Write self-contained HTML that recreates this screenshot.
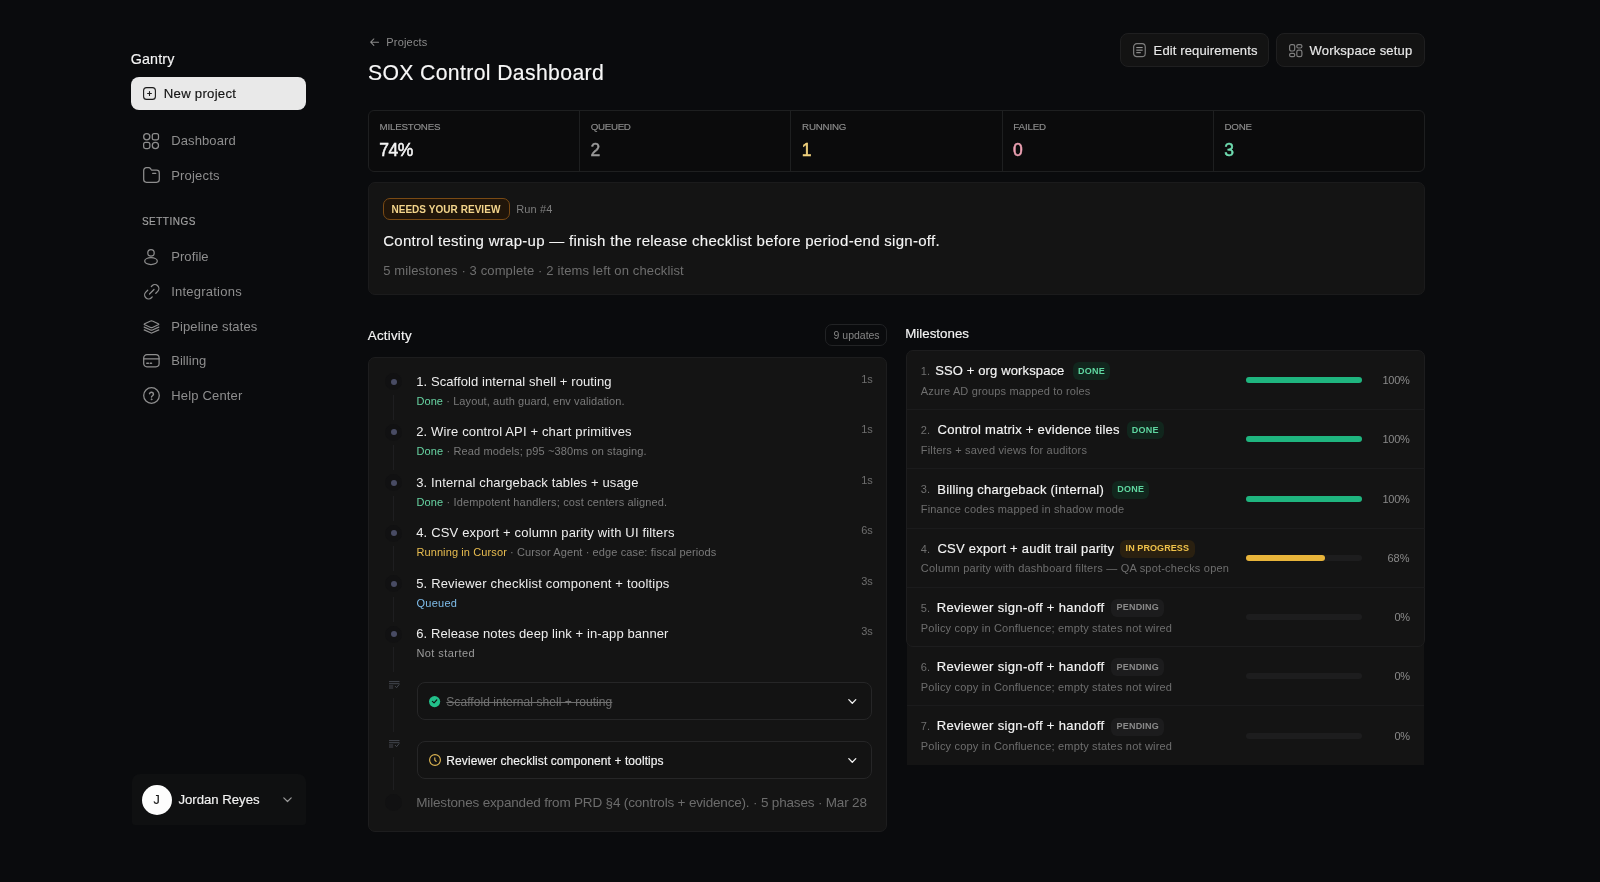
<!DOCTYPE html>
<html lang="en">
<head>
<meta charset="utf-8">
<title>SOX Control Dashboard</title>
<style>
*{box-sizing:border-box;margin:0;padding:0}
html,body{width:1600px;height:882px;overflow:hidden;background:#0a0b0d;color:#f2f2f2;font-family:"Liberation Sans",sans-serif}
#app{position:absolute;left:0;top:0;width:1600px;height:882px;will-change:transform}
.a{position:absolute}
.t{position:absolute;white-space:nowrap;line-height:1}
svg{display:block;overflow:visible;position:absolute}
.card{background:#141414;border:1px solid #1d1d1e;border-radius:7px}
.halo{width:17px;height:17px;border-radius:50%;background:#111112;left:385.4px}
.dot{width:6px;height:6px;border-radius:50%;background:#484b63;left:390.9px}
.xb{left:417px;width:455px;height:38px;border:1px solid #262627;border-radius:8px;background:#131313}
.bd{height:18px;border-radius:6px}
.trk{left:1246px;width:116px;height:6px;border-radius:3px;background:#1d1d1e}
.bar{height:6px;border-radius:3px;left:1246px}
.g{color:#67d3a2}.y{color:#e8bd50}.b{color:#7fbdea}.n{color:#9b9b9b}
</style>
</head>
<body>
<div id="app">
<aside id="sidebar">
<div class="a" style="left:131px;top:77px;width:175px;height:33px;border-radius:8px;background:#e9e9e9"></div>
<svg style="left:143px;top:87px" width="13" height="13" viewBox="0 0 13 13" fill="none" stroke="#1a1a1a" stroke-width="1.1" stroke-linecap="round"><rect x=".6" y=".6" width="11.8" height="11.8" rx="3"/><path d="M6.5 4.6v3.8M4.6 6.5h3.8"/></svg>
<svg style="left:143px;top:132.6px" width="16" height="16" viewBox="0 0 16 16" fill="none" stroke="#8e8e8e" stroke-width="1.25" stroke-linecap="round" stroke-linejoin="round"><circle cx="3.75" cy="3.75" r="3.1"/><rect x="9.3" y=".65" width="6.2" height="6.2" rx="1.9"/><rect x=".65" y="9.3" width="6.2" height="6.2" rx="1.9"/><circle cx="12.4" cy="12.4" r="3.1"/></svg>
<svg style="left:143px;top:167.3px" width="17" height="16" viewBox="0 0 17 16" fill="none" stroke="#8e8e8e" stroke-width="1.25" stroke-linecap="round" stroke-linejoin="round"><path d="M.7 3.4A2.7 2.7 0 0 1 3.4.7h2.2c.9 0 1.6.4 2.1 1.1l.5.8c.3.4.7.6 1.200.6h4.200a2.700 2.700 0 0 1 2.700 2.700v6.700a2.700 2.700 0 0 1-2.700 2.700H3.400A2.700 2.700 0 0 1 .7 12.600z"/><path d="M9.600 6.300h3.200"/></svg>
<svg style="left:144px;top:249.2px" width="14" height="16" viewBox="0 0 14 16" fill="none" stroke="#8e8e8e" stroke-width="1.25" stroke-linecap="round" stroke-linejoin="round"><circle cx="7" cy="3.900" r="3.200"/><ellipse cx="7" cy="12.100" rx="6.300" ry="3.400"/></svg>
<svg style="left:143.5px;top:284px" width="15.5" height="15.5" viewBox="0 0 15.5 15.5" fill="none" stroke="#8e8e8e" stroke-width="1.25" stroke-linecap="round" stroke-linejoin="round"><path d="M7.300 2.600l.8-.8a3.900 3.900 0 0 1 5.600 5.600l-1.900 1.900"/><path d="M8.200 12.900l-.8.800a3.900 3.900 0 0 1-5.600-5.600l1.900-1.900"/><path d="M5.500 10l4.500-4.500"/></svg>
<svg style="left:142.8px;top:319.5px" width="17" height="14" viewBox="0 0 17 14" fill="none" stroke="#8e8e8e" stroke-width="1.25" stroke-linecap="round" stroke-linejoin="round"><path d="M7.600 1 1.700 3.700c-.6.300-.6.800 0 1.100l5.900 2.700c.6.300 1.200.300 1.800 0l5.900-2.700c.6-.300.6-.800 0-1.100L9.400 1c-.6-.300-1.200-.300-1.800 0z"/><path d="M1.200 7.100l6.400 2.900c.6.300 1.200.300 1.800 0l6.400-2.900"/><path d="M1.200 9.900l6.400 2.900c.6.300 1.200.300 1.800 0l6.400-2.900"/></svg>
<svg style="left:142.8px;top:354.2px" width="17" height="13.500" viewBox="0 0 17 13.5" fill="none" stroke="#8e8e8e" stroke-width="1.25" stroke-linecap="round" stroke-linejoin="round"><rect x=".7" y=".7" width="15.400" height="12.100" rx="3.200"/><path d="M.7 4.800h15.400"/><path d="M3.800 9.300h1.600M7.300 9.300h1.200" stroke-width="1.500"/></svg>
<svg style="left:143px;top:387.200px" width="17" height="17" viewBox="0 0 17 17" fill="none" stroke="#8e8e8e" stroke-width="1.25" stroke-linecap="round" stroke-linejoin="round"><circle cx="8.500" cy="8.500" r="7.800"/><path d="M6.500 6.700a2.050 2.050 0 0 1 4 .600c0 1.300-2 1.500-2 2.800" stroke-width="1.400"/><circle cx="8.500" cy="12.300" r=".55" fill="#8e8e8e" stroke-width=".7"/></svg>
<div class="a" style="left:131.5px;top:774px;width:174.700px;height:50.500px;border-radius:8px 8px 3px 3px;background:#0f1011"></div>
<div class="a" style="left:141.7px;top:784.7px;width:30px;height:30px;border-radius:50%;background:#fdfdfd"></div>
<svg style="left:283.200px;top:797px" width="9" height="5.500" viewBox="0 0 9 5.500" fill="none" stroke="#9a9a9a" stroke-width="1.200" stroke-linecap="round" stroke-linejoin="round"><path d="M.8.800 4.500 4.500 8.200.800"/></svg>
<div class="t" style="top:52.00px;font-size:14.3px;color:#f4f4f4;left:130.70px;letter-spacing:0.166px;-webkit-text-stroke:.16px;">Gantry</div>
<div class="t" style="top:87.00px;font-size:13.2px;color:#141414;left:163.80px;letter-spacing:0.251px;-webkit-text-stroke:.16px;">New project</div>
<div class="t" style="top:134.00px;font-size:13px;color:#8e8e8e;left:171.20px;letter-spacing:0.110px;">Dashboard</div>
<div class="t" style="top:169.00px;font-size:13px;color:#8e8e8e;left:171.20px;letter-spacing:0.191px;">Projects</div>
<div class="t" style="top:250.00px;font-size:13px;color:#8e8e8e;left:171.20px;letter-spacing:0.092px;">Profile</div>
<div class="t" style="top:285.00px;font-size:13px;color:#8e8e8e;left:171.20px;letter-spacing:0.230px;">Integrations</div>
<div class="t" style="top:320.00px;font-size:13px;color:#8e8e8e;left:171.20px;letter-spacing:0.109px;">Pipeline states</div>
<div class="t" style="top:354.00px;font-size:13px;color:#8e8e8e;left:171.20px;letter-spacing:0.059px;">Billing</div>
<div class="t" style="top:389.00px;font-size:13px;color:#8e8e8e;left:171.20px;letter-spacing:0.175px;">Help Center</div>
<div class="t" style="top:217.00px;font-size:10px;color:#a0a0a0;left:141.90px;letter-spacing:0.498px;-webkit-text-stroke:.16px;">SETTINGS</div>
<div class="t" style="top:794.00px;font-size:12.5px;color:#151515;left:153.50px;-webkit-text-stroke:.16px;">J</div>
<div class="t" style="top:793.00px;font-size:13.2px;color:#f2f2f2;left:178.40px;letter-spacing:-0.015px;-webkit-text-stroke:.16px;">Jordan Reyes</div>
</aside>
<header id="pagehead">
<svg style="left:369.600px;top:38px" width="9.200" height="8.300" viewBox="0 0 10 9" fill="none" stroke="#8a8a8a" stroke-width="1.100" stroke-linecap="round" stroke-linejoin="round"><path d="M9.300 4.500H.800M4.200 1 .7 4.500l3.500 3.500"/></svg>
<div class="a" style="left:1120px;top:33px;width:149px;height:34px;border-radius:8px;background:#131313;border:1px solid #1f1f20"></div>
<svg style="left:1133.1px;top:42.8px" width="12.9" height="14.3" viewBox="0 0 12.9 14.3" fill="none" stroke="#7e7e7e" stroke-width="1.200" stroke-linecap="round"><rect x=".65" y=".65" width="11.600" height="13" rx="3.200"/><path d="M3.700 4.600h5.600M3.700 7.150h5.600M3.700 9.700h3.700" stroke="#b5b5b5" stroke-width=".9"/></svg>
<div class="a" style="left:1276px;top:33px;width:149px;height:34px;border-radius:8px;background:#131313;border:1px solid #1f1f20"></div>
<svg style="left:1288.6px;top:43.5px" width="13.5" height="13.3" viewBox="0 0 13.5 13.3" fill="none" stroke="#7e7e7e" stroke-width="1.200" stroke-linecap="round"><rect x=".6" y=".6" width="5.100" height="6.400" rx="1.700"/><rect x="7.800" y=".6" width="5.100" height="3.400" rx="1.500"/><rect x=".6" y="9.300" width="5.100" height="3.400" rx="1.500"/><rect x="7.800" y="6.200" width="5.100" height="6.500" rx="1.700"/></svg>
<div class="t" style="top:37.00px;font-size:11px;color:#8a8a8a;left:386.30px;letter-spacing:0.181px;">Projects</div>
<div class="t" style="top:62.00px;font-size:21.2px;color:#f7f7f7;left:367.90px;letter-spacing:0.372px;-webkit-text-stroke:.16px;">SOX Control Dashboard</div>
<div class="t" style="top:44.00px;font-size:13px;color:#e8e8e8;left:1153.60px;letter-spacing:0.124px;-webkit-text-stroke:.16px;">Edit requirements</div>
<div class="t" style="top:44.00px;font-size:13px;color:#e8e8e8;left:1309.60px;letter-spacing:0.166px;-webkit-text-stroke:.16px;">Workspace setup</div>
</header>
<section id="stats">
<div class="a" style="left:368px;top:110px;width:1057px;height:62px;border:1px solid #1e1f20;border-radius:6px;background:#0b0b0c"></div>
<div class="a" style="left:579px;top:111px;width:1px;height:59.500px;background:#1e1f20"></div>
<div class="a" style="left:790px;top:111px;width:1px;height:59.500px;background:#1e1f20"></div>
<div class="a" style="left:1002px;top:111px;width:1px;height:59.500px;background:#1e1f20"></div>
<div class="a" style="left:1213px;top:111px;width:1px;height:59.500px;background:#1e1f20"></div>
<div class="t" style="top:122.00px;font-size:9.75px;color:#8e8e8e;left:379.60px;letter-spacing:-0.197px;-webkit-text-stroke:.15px;">MILESTONES</div>
<div class="t" style="top:142.00px;font-size:17.5px;color:#f5f5f5;left:379.30px;letter-spacing:-0.510px;-webkit-text-stroke:.5px;">74%</div>
<div class="t" style="top:122.00px;font-size:9.75px;color:#8e8e8e;left:590.85px;letter-spacing:-0.336px;-webkit-text-stroke:.15px;">QUEUED</div>
<div class="t" style="top:142.00px;font-size:17.5px;color:#9a9a9a;left:590.55px;-webkit-text-stroke:.5px;">2</div>
<div class="t" style="top:122.00px;font-size:9.75px;color:#8e8e8e;left:802.10px;letter-spacing:-0.200px;-webkit-text-stroke:.15px;">RUNNING</div>
<div class="t" style="top:142.00px;font-size:17.5px;color:#f2d27e;left:801.80px;-webkit-text-stroke:.5px;">1</div>
<div class="t" style="top:122.00px;font-size:9.75px;color:#8e8e8e;left:1013.35px;letter-spacing:-0.168px;-webkit-text-stroke:.15px;">FAILED</div>
<div class="t" style="top:142.00px;font-size:17.5px;color:#f0a3b5;left:1013.05px;-webkit-text-stroke:.5px;">0</div>
<div class="t" style="top:122.00px;font-size:9.75px;color:#8e8e8e;left:1224.60px;letter-spacing:-0.268px;-webkit-text-stroke:.15px;">DONE</div>
<div class="t" style="top:142.00px;font-size:17.5px;color:#6fdcb0;left:1224.30px;-webkit-text-stroke:.5px;">3</div>
</section>
<section id="review">
<div class="a card" style="left:368px;top:182px;width:1057px;height:113px;border-color:#1b1b1c"></div>
<div class="a" style="left:383px;top:198px;width:126.500px;height:22px;border:1px solid #7a4a14;border-radius:7px;background:#20150a"></div>
<div class="t" style="top:205.00px;font-size:10px;color:#f3d48b;left:391.40px;font-weight:700;letter-spacing:0.049px;">NEEDS YOUR REVIEW</div>
<div class="t" style="top:204.00px;font-size:11px;color:#7d7d7d;left:516.20px;letter-spacing:0.136px;">Run #4</div>
<div class="t" style="top:233.00px;font-size:15px;color:#f5f5f5;left:383.20px;letter-spacing:0.285px;-webkit-text-stroke:.12px;">Control testing wrap-up — finish the release checklist before period-end sign-off.</div>
<div class="t" style="top:264.00px;font-size:13px;color:#6e6e6e;left:383.20px;letter-spacing:0.123px;">5 milestones · 3 complete · 2 items left on checklist</div>
</section>
<section id="activity">
<div class="a" style="left:825.400px;top:324.400px;width:61.700px;height:21.200px;border:1px solid #222325;border-radius:7px"></div>
<div class="a card" style="left:368px;top:357px;width:519px;height:475px"></div>
<div class="a" style="left:393px;top:394.6px;width:1px;height:25.0px;background:#1e1e20"></div>
<div class="a" style="left:393px;top:445.1px;width:1px;height:25.0px;background:#1e1e20"></div>
<div class="a" style="left:393px;top:495.6px;width:1px;height:25.0px;background:#1e1e20"></div>
<div class="a" style="left:393px;top:546.1px;width:1px;height:25.0px;background:#1e1e20"></div>
<div class="a" style="left:393px;top:596.6px;width:1px;height:25.0px;background:#1e1e20"></div>
<div class="a" style="left:393px;top:647.1px;width:1px;height:25.4px;background:#1e1e20"></div>
<div class="a" style="left:393px;top:698.0px;width:1px;height:33.5px;background:#1e1e20"></div>
<div class="a" style="left:393px;top:757.0px;width:1px;height:32.5px;background:#1e1e20"></div>
<div class="a halo" style="top:373.1px"></div><div class="a dot" style="top:378.6px"></div>
<div class="a halo" style="top:423.6px"></div><div class="a dot" style="top:429.1px"></div>
<div class="a halo" style="top:474.1px"></div><div class="a dot" style="top:479.6px"></div>
<div class="a halo" style="top:524.6px"></div><div class="a dot" style="top:530.1px"></div>
<div class="a halo" style="top:575.1px"></div><div class="a dot" style="top:580.6px"></div>
<div class="a halo" style="top:625.6px"></div><div class="a dot" style="top:631.1px"></div>
<svg style="left:388.7px;top:680.8px" width="10.500" height="8" viewBox="0 0 10.500 8" fill="none" stroke="#4a4d56" stroke-width=".9" stroke-linecap="round" stroke-linejoin="round"><path d="M.4.600h9.700M.4 2.700h9.700M.4 5h3.400M.4 7h3.400M6.200 5.300l1.400 1.400 2.400-3"/></svg>
<div class="a xb" style="top:682px"></div>
<svg style="left:429px;top:695.700px" width="11.200" height="11.200" viewBox="0 0 11.200 11.200"><circle cx="5.600" cy="5.600" r="5.600" fill="#22c08a"/><path d="M3.400 5.400 5.100 6.900 7.800 3.900" fill="none" stroke="#121212" stroke-width="1.200" stroke-linecap="round" stroke-linejoin="round"/></svg>
<svg style="left:848.200px;top:698.5px" width="8.600" height="5.200" viewBox="0 0 9 5.500" fill="none" stroke="#f0f0f0" stroke-width="1.400" stroke-linecap="round" stroke-linejoin="round"><path d="M.8.700 4.500 4.500 8.200.700"/></svg>
<svg style="left:388.7px;top:739.8px" width="10.500" height="8" viewBox="0 0 10.500 8" fill="none" stroke="#4a4d56" stroke-width=".9" stroke-linecap="round" stroke-linejoin="round"><path d="M.4.600h9.700M.4 2.700h9.700M.4 5h3.400M.4 7h3.400M6.200 5.300l1.400 1.400 2.400-3"/></svg>
<div class="a xb" style="top:741px"></div>
<svg style="left:428.600px;top:754.200px" width="12" height="12" viewBox="0 0 12 12" fill="none" stroke="#dcb452" stroke-width="1.150" stroke-linecap="round" stroke-linejoin="round"><circle cx="6" cy="6" r="5.400"/><path d="M5.800 3.900v2.100l1.300 1.400"/></svg>
<svg style="left:848.200px;top:757.5px" width="8.600" height="5.200" viewBox="0 0 9 5.500" fill="none" stroke="#f0f0f0" stroke-width="1.400" stroke-linecap="round" stroke-linejoin="round"><path d="M.8.700 4.500 4.500 8.200.700"/></svg>
<div class="a halo" style="top:794px;background:#111112"></div>
<div class="t" style="top:329.00px;font-size:13.3px;color:#f4f4f4;left:367.80px;letter-spacing:0.234px;-webkit-text-stroke:.16px;">Activity</div>
<div class="t" style="top:330.00px;font-size:10.5px;color:#858585;left:833.60px;letter-spacing:-0.014px;">9 updates</div>
<div class="t" style="top:375.00px;font-size:13px;color:#ededed;left:416.20px;letter-spacing:0.084px;">1. Scaffold internal shell + routing</div>
<div class="t" style="top:396.00px;font-size:11px;color:#7a7a7a;left:416.40px;letter-spacing:0.096px;"><span class="g">Done</span> · Layout, auth guard, env validation.</div>
<div class="t" style="top:374.00px;font-size:11px;color:#6e6e6e;right:727.20px;">1s</div>
<div class="t" style="top:425.00px;font-size:13px;color:#ededed;left:416.20px;letter-spacing:0.148px;">2. Wire control API + chart primitives</div>
<div class="t" style="top:446.00px;font-size:11px;color:#7a7a7a;left:416.40px;letter-spacing:0.133px;"><span class="g">Done</span> · Read models; p95 ~380ms on staging.</div>
<div class="t" style="top:424.00px;font-size:11px;color:#6e6e6e;right:727.20px;">1s</div>
<div class="t" style="top:476.00px;font-size:13px;color:#ededed;left:416.20px;letter-spacing:0.141px;">3. Internal chargeback tables + usage</div>
<div class="t" style="top:497.00px;font-size:11px;color:#7a7a7a;left:416.40px;letter-spacing:0.154px;"><span class="g">Done</span> · Idempotent handlers; cost centers aligned.</div>
<div class="t" style="top:475.00px;font-size:11px;color:#6e6e6e;right:727.20px;">1s</div>
<div class="t" style="top:526.00px;font-size:13px;color:#ededed;left:416.20px;letter-spacing:0.165px;">4. CSV export + column parity with UI filters</div>
<div class="t" style="top:547.00px;font-size:11px;color:#7a7a7a;left:416.40px;letter-spacing:0.109px;"><span class="y">Running in Cursor</span> · Cursor Agent · edge case: fiscal periods</div>
<div class="t" style="top:525.00px;font-size:11px;color:#6e6e6e;right:727.20px;">6s</div>
<div class="t" style="top:577.00px;font-size:13px;color:#ededed;left:416.20px;letter-spacing:0.173px;">5. Reviewer checklist component + tooltips</div>
<div class="t" style="top:598.00px;font-size:11px;color:#7a7a7a;left:416.40px;letter-spacing:0.291px;"><span class="b">Queued</span></div>
<div class="t" style="top:576.00px;font-size:11px;color:#6e6e6e;right:727.20px;">3s</div>
<div class="t" style="top:627.00px;font-size:13px;color:#ededed;left:416.20px;letter-spacing:0.096px;">6. Release notes deep link + in-app banner</div>
<div class="t" style="top:648.00px;font-size:11px;color:#7a7a7a;left:416.40px;letter-spacing:0.444px;"><span class="n">Not started</span></div>
<div class="t" style="top:626.00px;font-size:11px;color:#6e6e6e;right:727.20px;">3s</div>
<div class="t" style="top:696.00px;font-size:12px;color:#707070;left:446.30px;letter-spacing:0.054px;text-decoration:line-through;">Scaffold internal shell + routing</div>
<div class="t" style="top:755.00px;font-size:12px;color:#f2f2f2;left:446.30px;letter-spacing:0.093px;-webkit-text-stroke:.16px;">Reviewer checklist component + tooltips</div>
<div class="t" style="top:796.00px;font-size:13.5px;color:#6c6c6c;left:416.30px;letter-spacing:-0.174px;">Milestones expanded from PRD §4 (controls + evidence). · 5 phases · Mar 28</div>
</section>
<section id="milestones">
<div class="a" style="left:907px;top:640px;width:517px;height:125px;background:#141414"></div>
<div class="a card" style="left:905.500px;top:350px;width:519.500px;height:297px"></div>
<div class="a bd" style="left:1072.9px;top:362.0px;width:37px;background:#11261d"></div>
<div class="a trk" style="top:377.1px"></div>
<div class="a bar" style="top:377.1px;width:116.0px;background:#1fb57f"></div>
<div class="a" style="left:906.5px;top:409px;width:518px;height:1px;background:#1b1b1c"></div>
<div class="a bd" style="left:1126.5px;top:421.2px;width:37px;background:#11261d"></div>
<div class="a trk" style="top:436.3px"></div>
<div class="a bar" style="top:436.3px;width:116.0px;background:#1fb57f"></div>
<div class="a" style="left:906.5px;top:468px;width:518px;height:1px;background:#1b1b1c"></div>
<div class="a bd" style="left:1112.0px;top:480.5px;width:37px;background:#11261d"></div>
<div class="a trk" style="top:495.6px"></div>
<div class="a bar" style="top:495.6px;width:116.0px;background:#1fb57f"></div>
<div class="a" style="left:906.5px;top:528px;width:518px;height:1px;background:#1b1b1c"></div>
<div class="a bd" style="left:1120.4px;top:539.8px;width:74.3px;background:#2a2010"></div>
<div class="a trk" style="top:554.9px"></div>
<div class="a bar" style="top:554.9px;width:78.9px;background:#e8b43a"></div>
<div class="a" style="left:906.5px;top:587px;width:518px;height:1px;background:#1b1b1c"></div>
<div class="a bd" style="left:1111.3px;top:599.0px;width:52.7px;background:#1c1c1d"></div>
<div class="a trk" style="top:614.1px"></div>
<div class="a bd" style="left:1111.3px;top:658.2px;width:52.7px;background:#1c1c1d"></div>
<div class="a trk" style="top:673.4px"></div>
<div class="a" style="left:907px;top:705px;width:517px;height:1px;background:#1b1b1c"></div>
<div class="a bd" style="left:1111.3px;top:717.5px;width:52.7px;background:#1c1c1d"></div>
<div class="a trk" style="top:732.6px"></div>
<div class="t" style="top:327.00px;font-size:13.3px;color:#f4f4f4;left:905.20px;letter-spacing:0.024px;-webkit-text-stroke:.16px;">Milestones</div>
<div class="t" style="top:366.00px;font-size:11px;color:#6f6f6f;left:920.80px;">1.</div>
<div class="t" style="top:364.00px;font-size:13px;color:#f4f4f4;left:935.20px;letter-spacing:0.131px;-webkit-text-stroke:.16px;">SSO + org workspace</div>
<div class="t" style="top:367.00px;font-size:9px;color:#5fd6a0;left:1078.10px;font-weight:700;letter-spacing:0.246px;">DONE</div>
<div class="t" style="top:386.00px;font-size:11px;color:#6e6e6e;left:920.80px;letter-spacing:0.149px;">Azure AD groups mapped to roles</div>
<div class="t" style="top:375.00px;font-size:11px;color:#8a8a8a;right:190.40px;letter-spacing:-0.235px;">100%</div>
<div class="t" style="top:425.00px;font-size:11px;color:#6f6f6f;left:920.80px;">2.</div>
<div class="t" style="top:423.00px;font-size:13px;color:#f4f4f4;left:937.60px;letter-spacing:0.248px;-webkit-text-stroke:.16px;">Control matrix + evidence tiles</div>
<div class="t" style="top:426.00px;font-size:9px;color:#5fd6a0;left:1131.70px;font-weight:700;letter-spacing:0.246px;">DONE</div>
<div class="t" style="top:445.00px;font-size:11px;color:#6e6e6e;left:920.80px;letter-spacing:0.171px;">Filters + saved views for auditors</div>
<div class="t" style="top:434.00px;font-size:11px;color:#8a8a8a;right:190.40px;letter-spacing:-0.235px;">100%</div>
<div class="t" style="top:484.00px;font-size:11px;color:#6f6f6f;left:920.80px;">3.</div>
<div class="t" style="top:483.00px;font-size:13px;color:#f4f4f4;left:937.30px;letter-spacing:0.216px;-webkit-text-stroke:.16px;">Billing chargeback (internal)</div>
<div class="t" style="top:485.00px;font-size:9px;color:#5fd6a0;left:1117.20px;font-weight:700;letter-spacing:0.246px;">DONE</div>
<div class="t" style="top:504.00px;font-size:11px;color:#6e6e6e;left:920.80px;letter-spacing:0.171px;">Finance codes mapped in shadow mode</div>
<div class="t" style="top:494.00px;font-size:11px;color:#8a8a8a;right:190.40px;letter-spacing:-0.235px;">100%</div>
<div class="t" style="top:544.00px;font-size:11px;color:#6f6f6f;left:920.80px;">4.</div>
<div class="t" style="top:542.00px;font-size:13px;color:#f4f4f4;left:937.40px;letter-spacing:0.237px;-webkit-text-stroke:.16px;">CSV export + audit trail parity</div>
<div class="t" style="top:544.00px;font-size:9px;color:#f0c24a;left:1125.60px;font-weight:700;letter-spacing:0.080px;">IN PROGRESS</div>
<div class="t" style="top:563.00px;font-size:11px;color:#6e6e6e;left:920.80px;letter-spacing:0.203px;">Column parity with dashboard filters — QA spot-checks open</div>
<div class="t" style="top:553.00px;font-size:11px;color:#8a8a8a;right:190.40px;letter-spacing:0.056px;">68%</div>
<div class="t" style="top:603.00px;font-size:11px;color:#6f6f6f;left:920.80px;">5.</div>
<div class="t" style="top:601.00px;font-size:13px;color:#f4f4f4;left:936.70px;letter-spacing:0.353px;-webkit-text-stroke:.16px;">Reviewer sign-off + handoff</div>
<div class="t" style="top:603.00px;font-size:9px;color:#8a8a8a;left:1116.50px;font-weight:700;letter-spacing:0.212px;">PENDING</div>
<div class="t" style="top:623.00px;font-size:11px;color:#6e6e6e;left:920.80px;letter-spacing:0.189px;">Policy copy in Confluence; empty states not wired</div>
<div class="t" style="top:612.00px;font-size:11px;color:#8a8a8a;right:190.40px;letter-spacing:-0.353px;">0%</div>
<div class="t" style="top:662.00px;font-size:11px;color:#6f6f6f;left:920.80px;">6.</div>
<div class="t" style="top:660.00px;font-size:13px;color:#f4f4f4;left:936.70px;letter-spacing:0.353px;-webkit-text-stroke:.16px;">Reviewer sign-off + handoff</div>
<div class="t" style="top:663.00px;font-size:9px;color:#8a8a8a;left:1116.50px;font-weight:700;letter-spacing:0.212px;">PENDING</div>
<div class="t" style="top:682.00px;font-size:11px;color:#6e6e6e;left:920.80px;letter-spacing:0.189px;">Policy copy in Confluence; empty states not wired</div>
<div class="t" style="top:671.00px;font-size:11px;color:#8a8a8a;right:190.40px;letter-spacing:-0.353px;">0%</div>
<div class="t" style="top:721.00px;font-size:11px;color:#6f6f6f;left:920.80px;">7.</div>
<div class="t" style="top:719.00px;font-size:13px;color:#f4f4f4;left:936.70px;letter-spacing:0.353px;-webkit-text-stroke:.16px;">Reviewer sign-off + handoff</div>
<div class="t" style="top:722.00px;font-size:9px;color:#8a8a8a;left:1116.50px;font-weight:700;letter-spacing:0.212px;">PENDING</div>
<div class="t" style="top:741.00px;font-size:11px;color:#6e6e6e;left:920.80px;letter-spacing:0.189px;">Policy copy in Confluence; empty states not wired</div>
<div class="t" style="top:731.00px;font-size:11px;color:#8a8a8a;right:190.40px;letter-spacing:-0.353px;">0%</div>
</section>
</div>
</body>
</html>
